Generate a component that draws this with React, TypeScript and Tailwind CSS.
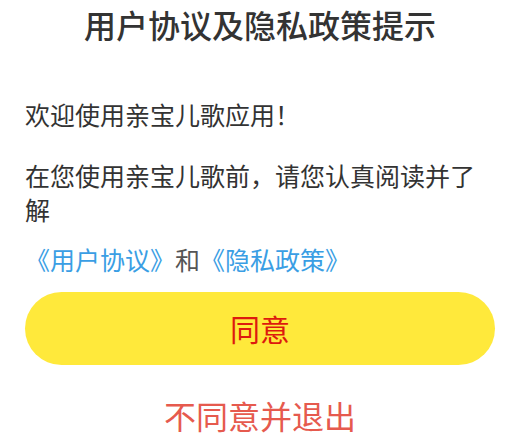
import React from "react";

export default function App() {
  return (
    <div
      className="w-[511px] h-[434px] overflow-hidden bg-white pl-[25px] pr-[16px]"
      style={{ fontFamily: '"Noto Sans CJK SC", "Noto Sans", sans-serif' }}
    >
      <h1 className="pt-[4px] text-center text-[32px] leading-[40px] font-medium text-[#333333]">
        用户协议及隐私政策提示
      </h1>

      <p className="mt-[53px] text-[25px] leading-[34px] text-[#333333]">欢迎使用亲宝儿歌应用！</p>

      <p className="mt-[27px] text-[25px] leading-[34px] text-[#333333]">
        在您使用亲宝儿歌前，请您认真阅读并了解
      </p>

      <p className="mt-[16px] text-[25px] leading-[34px] text-[#555555]">
        <span className="text-[#3a9ee4]">《用户协议》</span>和<span className="text-[#3a9ee4]">《隐私政策》</span>
      </p>

      <button className="mt-[16px] flex h-[73px] w-full items-center justify-center rounded-full bg-[#ffe93b] text-[30px] text-[#dd1a0e]">
        同意
      </button>

      <button className="mt-[30px] block w-full text-center text-[32px] leading-[40px] text-[#e65a4e]">
        不同意并退出
      </button>
    </div>
  );
}
